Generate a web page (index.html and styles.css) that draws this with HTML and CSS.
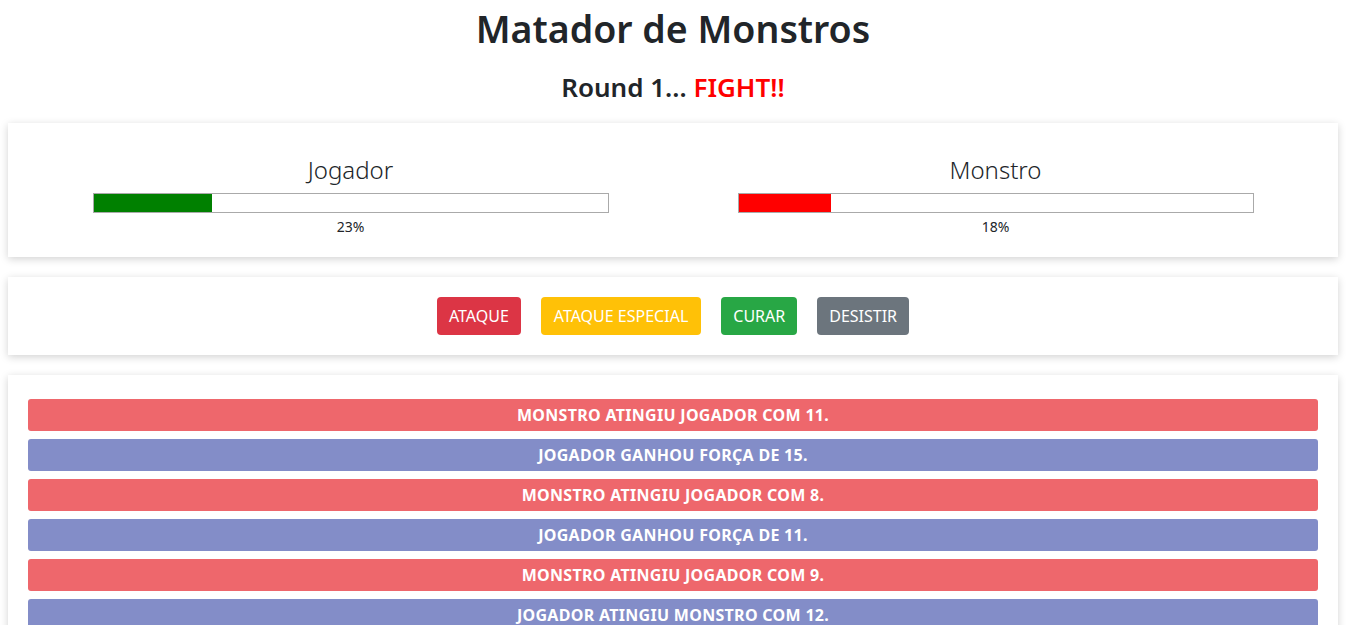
FILE: index.html
```html
<!DOCTYPE html>
<html lang="pt-BR">
<head>
<meta charset="utf-8">
<title>Matador de Monstros</title>
<link rel="stylesheet" href="styles.css">
</head>
<body>
<div class="app">
  <h1 class="title">Matador de Monstros</h1>
  <h3 class="round">Round 1... <span class="fight">FIGHT!!</span></h3>

  <section class="panel scores">
    <div class="score">
      <h2 class="score-name">Jogador</h2>
      <div class="life"><div class="life-fill player" style="width: 23%"></div></div>
      <div class="life-pct">23%</div>
    </div>
    <div class="score">
      <h2 class="score-name">Monstro</h2>
      <div class="life"><div class="life-fill monster" style="width: 18%"></div></div>
      <div class="life-pct">18%</div>
    </div>
  </section>

  <section class="panel controls">
    <button class="btn btn-attack">ATAQUE</button>
    <button class="btn btn-special">ATAQUE ESPECIAL</button>
    <button class="btn btn-heal">CURAR</button>
    <button class="btn btn-quit">DESISTIR</button>
  </section>

  <section class="panel logs">
    <ul class="log-list">
      <li class="log monster">MONSTRO ATINGIU JOGADOR COM 11.</li>
      <li class="log player">JOGADOR GANHOU FORÇA DE 15.</li>
      <li class="log monster">MONSTRO ATINGIU JOGADOR COM 8.</li>
      <li class="log player">JOGADOR GANHOU FORÇA DE 11.</li>
      <li class="log monster">MONSTRO ATINGIU JOGADOR COM 9.</li>
      <li class="log player">JOGADOR ATINGIU MONSTRO COM 12.</li>
      <li class="log monster">MONSTRO ATINGIU JOGADOR COM 10.</li>
      <li class="log player">JOGADOR ATINGIU MONSTRO COM 7.</li>
    </ul>
  </section>
</div>
</body>
</html>
```

FILE: styles.css
```css
* { box-sizing: border-box; }

body {
  margin: 0;
  background: #fff;
  color: #212529;
  font-family: "Noto Sans", "Open Sans", sans-serif;
}

.app {
  padding: 0 8px;
}

.title {
  margin: 0;
  padding-top: 5px;
  text-align: center;
  font-size: 37.5px;
  line-height: 48px;
  font-weight: 600;
  color: #212529;
}

.round {
  margin: 18px 0 20px;
  text-align: center;
  font-size: 26px;
  line-height: 32px;
  font-weight: 600;
}

.fight { color: #ff0000; }

.panel {
  background: #fff;
  box-shadow: 0 2px 8px rgba(0, 0, 0, 0.18);
  margin-bottom: 20px;
  padding: 20px;
}

.scores {
  display: flex;
  padding-top: 30px;
  padding-bottom: 20px;
}

.score {
  flex: 1;
  display: flex;
  flex-direction: column;
  align-items: center;
}

.score-name {
  margin: 0 0 6px;
  font-size: 24px;
  line-height: 34px;
  font-weight: 300;
  color: #212529;
}

.life {
  width: 80%;
  height: 20px;
  border: 1px solid #aaa;
  background: #fff;
}

.life-fill { height: 100%; }
.life-fill.player { background: #008000; }
.life-fill.monster { background: #ff0000; }

.life-pct {
  margin-top: 4px;
  font-size: 14px;
  line-height: 20px;
}

.controls {
  display: flex;
  justify-content: center;
  gap: 20px;
}

.btn {
  border: none;
  border-radius: 4px;
  padding: 0 12px;
  height: 38px;
  font-family: inherit;
  font-size: 16px;
  color: #fff;
  cursor: pointer;
}

.btn-attack { background: #dc3545; }
.btn-special { background: #ffc107; padding: 0 13px; }
.btn-heal { background: #28a745; }
.btn-quit { background: #6c757d; }

.logs {
  padding-top: 24px;
}

.log-list {
  list-style: none;
  margin: 0;
  padding: 0;
  display: flex;
  flex-direction: column;
  gap: 8px;
}

.log {
  height: 32px;
  line-height: 32px;
  border-radius: 3px;
  text-align: center;
  color: #fff;
  font-weight: 700;
  font-size: 16px;
  letter-spacing: 0.3px;
}

.log.monster { background: #ee676c; }
.log.player { background: #838dc8; }
```
